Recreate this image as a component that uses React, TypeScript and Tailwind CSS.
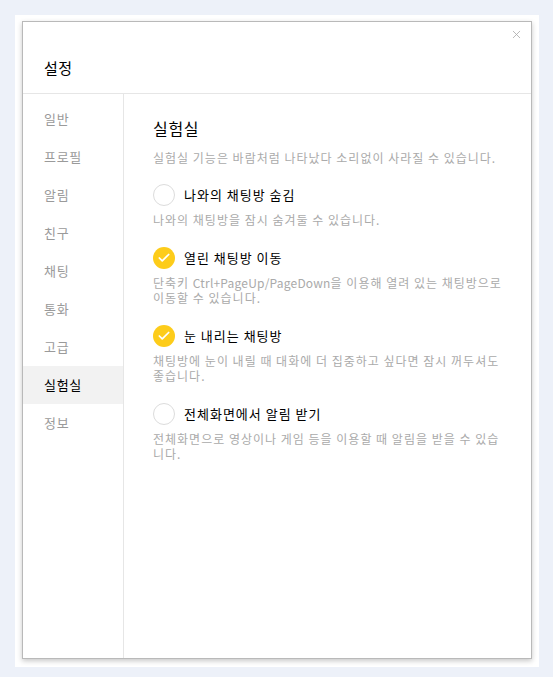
import type { ReactNode } from "react";
import { Check, X } from "lucide-react";

const menu = ["일반", "프로필", "알림", "친구", "채팅", "통화", "고급", "실험실", "정보"];

type LabItem = {
  title: string;
  desc: ReactNode;
  checked: boolean;
};

const labItems: LabItem[] = [
  { title: "나와의 채팅방 숨김", desc: "나와의 채팅방을 잠시 숨겨둘 수 있습니다.", checked: false },
  {
    title: "열린 채팅방 이동",
    desc: (
      <>
        단축키 <span className="tracking-[0.2px]">Ctrl+PageUp/PageDown</span>을 이용해 열려 있는 채팅방으로 이동할 수
        있습니다.
      </>
    ),
    checked: true,
  },
  {
    title: "눈 내리는 채팅방",
    desc: "채팅방에 눈이 내릴 때 대화에 더 집중하고 싶다면 잠시 꺼두셔도 좋습니다.",
    checked: true,
  },
  {
    title: "전체화면에서 알림 받기",
    desc: "전체화면으로 영상이나 게임 등을 이용할 때 알림을 받을 수 있습니다.",
    checked: false,
  },
];

function CheckCircle({ checked }: { checked: boolean }) {
  if (checked) {
    return (
      <span className="flex size-[22px] shrink-0 items-center justify-center rounded-full bg-[#fdcc1a]">
        <Check className="size-[14px] text-white" strokeWidth={3} />
      </span>
    );
  }

  return <span className="size-[22px] shrink-0 rounded-full border border-[#dcdcdc] bg-white" />;
}

export default function App() {
  return (
    <div
      className="h-[677px] w-[553px] bg-[#edf1f9] pt-[15px] pl-[15px]"
      style={{ fontFamily: '"Noto Sans CJK KR", "Noto Sans", sans-serif' }}
    >
      <div className="h-[652px] w-[524px] bg-white pt-[6px] pl-[7px]">
        <div className="relative flex h-[638px] w-[510px] flex-col border border-[#b9b9b9] bg-white shadow-[0_2px_5px_rgba(0,0,0,0.22)]">
          <button className="absolute right-[8px] top-[6px] text-[#aaaaaa]">
            <X className="size-[13px]" strokeWidth={1.5} />
          </button>

          <div className="h-[72px] shrink-0 border-b border-[#e6e6e6] pl-[21px] pt-[35px]">
            <h1 className="text-[15px] leading-[22px] tracking-[0.5px] text-black">설정</h1>
          </div>

          <div className="flex flex-1">
            <nav className="w-[101px] shrink-0 border-r border-[#e6e6e6] pt-[6px]">
              {menu.map((item) => (
                <div
                  key={item}
                  className={`flex h-[38px] items-center pl-[21px] text-[13px] tracking-[0.7px] ${
                    item === "실험실" ? "bg-[#f2f2f2] text-black" : "text-[#9a9a9a]"
                  }`}
                >
                  {item}
                </div>
              ))}
            </nav>

            <section className="flex-1 pl-[29px] pr-[22px] pt-[22px]">
              <h2 className="text-[16px] leading-[24px] tracking-[0.7px] text-black">실험실</h2>
              <p className="mt-[10px] text-[12px] leading-[15px] tracking-[1px] text-[#aaaaaa]">
                실험실 기능은 바람처럼 나타났다 소리없이 사라질 수 있습니다.
              </p>

              <div className="mt-[7px]">
                {labItems.map((item) => (
                  <div key={item.title} className="pt-[12px]">
                    <label className="flex items-center gap-[9px]">
                      <CheckCircle checked={item.checked} />
                      <span className="text-[13px] leading-[22px] tracking-[1px] text-black">{item.title}</span>
                    </label>
                    <p className="mt-[6px] pb-[8px] text-[12px] leading-[15px] tracking-[1px] text-[#aaaaaa]">
                      {item.desc}
                    </p>
                  </div>
                ))}
              </div>
            </section>
          </div>
        </div>
      </div>
    </div>
  );
}
